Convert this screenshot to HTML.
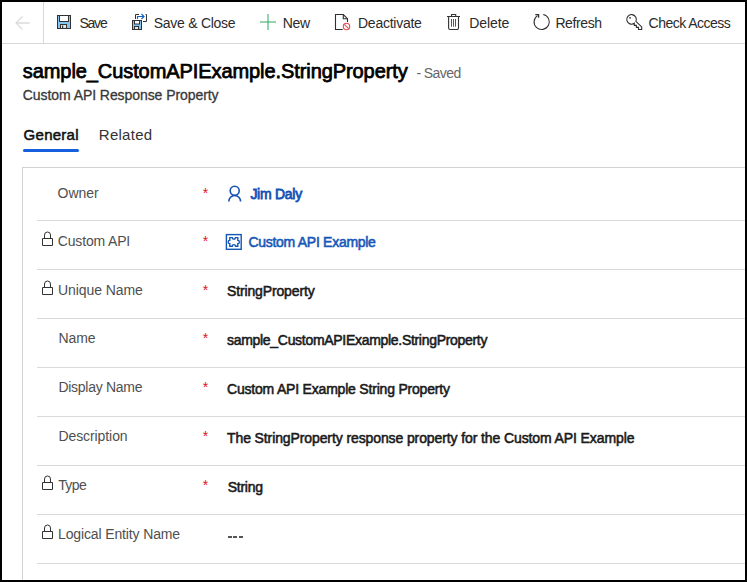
<!DOCTYPE html>
<html><head><meta charset="utf-8">
<style>
html,body{margin:0;padding:0;}
body{width:747px;height:582px;position:relative;overflow:hidden;background:#fff;font-family:"Liberation Sans",sans-serif;}
#border{position:absolute;left:0;top:0;width:747px;height:582px;box-sizing:border-box;border:2px solid #000;}
.a{position:absolute;white-space:pre;line-height:20px;height:20px;}
.tb{font-size:14px;color:#2b2b2b;top:13px;}
.ic{position:absolute;overflow:visible;}
.lbl{font-size:14px;color:#4a4a4a;}
.val{font-size:14px;color:#1a1a1a;font-weight:bold;}
.sep{position:absolute;left:37px;width:710px;height:1px;background:#dadada;}
.req{position:absolute;font-size:14px;color:#e3141c;line-height:20px;}
</style></head><body>
  <!-- toolbar -->
  <div style="position:absolute;left:0;top:43px;width:747px;height:1px;background:#d8d8d8"></div>
  <div style="position:absolute;left:43px;top:0;width:1px;height:43px;background:#d8d8d8"></div>
  <svg class="ic" style="left:0;top:0" width="747" height="44" viewBox="0 0 747 44">
    <!-- back arrow -->
    <path d="M29.7 23H16M22.5 16.5L16 23L22.5 29.5" fill="none" stroke="#dcdcdc" stroke-width="1.3"/>
    <!-- save -->
    <rect x="57.5" y="15.5" width="13" height="13" fill="#84c4f0" stroke="#333" stroke-width="1"/>
    <rect x="59.5" y="15.5" width="9" height="6" fill="#fff" stroke="#333" stroke-width="1"/>
    <rect x="60.5" y="24.5" width="6" height="4" fill="#e6e6e6" stroke="#333" stroke-width="1"/>
    <rect x="62" y="25.5" width="1.2" height="3" fill="#333"/>
    <!-- save & close -->
    <rect x="132.5" y="20.5" width="9" height="9" fill="#84c4f0" stroke="#333" stroke-width="1"/>
    <rect x="134.5" y="20.5" width="5" height="3.5" fill="#fff" stroke="#333" stroke-width="1"/>
    <rect x="134.5" y="26.5" width="4" height="3" fill="#e6e6e6" stroke="#333" stroke-width="1"/>
    <path d="M135.5 19V14.5H139M143 21.5H146.5V14.5H145.5" fill="none" stroke="#333" stroke-width="1"/>
    <path d="M137.5 19V16.5H144M141.5 14L144 16.5L141.5 19" fill="none" stroke="#1a62c0" stroke-width="1.2"/>
    <!-- new -->
    <path d="M260 22H276" fill="none" stroke="rgba(40,168,90,0.55)" stroke-width="1.8"/><path d="M268 14V30" fill="none" stroke="rgba(40,168,90,0.55)" stroke-width="1.8"/>
    <!-- deactivate -->
    <path d="M342.7 29.5H335.5V14.5H343.3L347.5 18.7V22" fill="none" stroke="#2e2e2e" stroke-width="1.1"/>
    <path d="M343.3 14.5V18.7H347.5" fill="none" stroke="#2e2e2e" stroke-width="1.1"/>
    <circle cx="346.5" cy="26.5" r="3.2" fill="none" stroke="#e8484f" stroke-width="1.1"/>
    <path d="M344.3 24.3L348.7 28.7" stroke="#e8484f" stroke-width="1.1"/>
    <!-- delete -->
    <path d="M447 16.5H460M451.5 16.5V14.5H455.7V16.5M448.6 16.5V28A1.5 1.5 0 0 0 450.1 29.5H457A1.5 1.5 0 0 0 458.5 28V16.5" fill="none" stroke="#333" stroke-width="1.1"/>
    <path d="M451.5 19V26.7M453.5 19V26.7M455.5 19V26.7" fill="none" stroke="#555" stroke-width="1"/>
    <!-- refresh -->
    <path d="M543.2 14.5A7.6 7.6 0 1 1 537.5 15.6" fill="none" stroke="#333" stroke-width="1.1"/>
    <path d="M535.3 14.6H538.6V17.8" fill="none" stroke="#333" stroke-width="1.3"/>
    <!-- key -->
    <path d="M635.9 21.4L641.7 26.9V29.5H638.5V27.4H636.4V25.4H634.3V23.3A4.8 4.8 0 1 1 635.9 21.4Z" fill="none" stroke="#2e2e2e" stroke-width="1.1" stroke-linejoin="miter"/>
    <rect x="629.3" y="17.1" width="1.5" height="1.5" fill="#2e2e2e"/>
  </svg>

  <span id="t_save" class="a" style="left:79.40px;top:13px;font-size:14px;color:#2b2b2b;letter-spacing:-1.200px">Save</span>
  <span id="t_saveclose" class="a" style="left:153.80px;top:13px;font-size:14px;color:#2b2b2b;letter-spacing:-0.275px">Save &amp; Close</span>
  <span id="t_new" class="a" style="left:282.80px;top:13px;font-size:14px;color:#2b2b2b;letter-spacing:-0.400px">New</span>
  <span id="t_deact" class="a" style="left:358.00px;top:13px;font-size:14px;color:#2b2b2b;letter-spacing:-0.249px">Deactivate</span>
  <span id="t_delete" class="a" style="left:469.20px;top:13px;font-size:14px;color:#2b2b2b;letter-spacing:-0.080px">Delete</span>
  <span id="t_refresh" class="a" style="left:555.40px;top:13px;font-size:14px;color:#2b2b2b;letter-spacing:-0.395px">Refresh</span>
  <span id="t_check" class="a" style="left:648.60px;top:13px;font-size:14px;color:#2b2b2b;letter-spacing:-0.523px">Check Access</span>
  <span id="h_title" class="a" style="left:22.80px;top:59px;font-size:20px;color:#000;line-height:24px;height:24px;-webkit-text-stroke-width:0.75px;letter-spacing:-0.081px">sample_CustomAPIExample.StringProperty</span>
  <span id="h_saved" class="a" style="left:416.40px;top:63px;font-size:14px;color:#666;letter-spacing:-0.562px">- Saved</span>
  <span id="h_sub" class="a" style="left:22.80px;top:85px;font-size:14px;color:#383838;-webkit-text-stroke-width:0.3px;letter-spacing:-0.069px">Custom API Response Property</span>
  <span id="tab_gen" class="a" style="left:23.60px;top:125px;font-size:15px;color:#111;-webkit-text-stroke-width:0.55px;letter-spacing:0.266px">General</span>
  <span id="tab_rel" class="a" style="left:98.80px;top:125px;font-size:15px;color:#333;letter-spacing:0.271px">Related</span>
  <span id="l1" class="a" style="left:57.60px;top:183px;font-size:14px;color:#4f4f4f;letter-spacing:-0.050px">Owner</span>
  <span id="l2" class="a" style="left:57.80px;top:231px;font-size:14px;color:#4f4f4f;letter-spacing:-0.169px">Custom API</span>
  <span id="l3" class="a" style="left:58.00px;top:280px;font-size:14px;color:#4f4f4f;letter-spacing:-0.080px">Unique Name</span>
  <span id="l4" class="a" style="left:58.40px;top:328px;font-size:14px;color:#4f4f4f;letter-spacing:-0.069px">Name</span>
  <span id="l5" class="a" style="left:58.40px;top:377px;font-size:14px;color:#4f4f4f;letter-spacing:-0.272px">Display Name</span>
  <span id="l6" class="a" style="left:58.40px;top:426px;font-size:14px;color:#4f4f4f;letter-spacing:-0.080px">Description</span>
  <span id="l7" class="a" style="left:58.20px;top:475px;font-size:14px;color:#4f4f4f;letter-spacing:-0.602px">Type</span>
  <span id="l8" class="a" style="left:58.00px;top:524px;font-size:14px;color:#4f4f4f;letter-spacing:-0.132px">Logical Entity Name</span>
  <span id="v1" class="a" style="left:250.40px;top:184px;font-size:14px;color:#1553b5;-webkit-text-stroke-width:0.8px;letter-spacing:-0.266px">Jim Daly</span>
  <span id="v2" class="a" style="left:248.40px;top:232px;font-size:14px;color:#1557b8;-webkit-text-stroke-width:0.55px;letter-spacing:-0.280px">Custom API Example</span>
  <span id="v3" class="a" style="left:227.00px;top:281px;font-size:14px;color:#1a1a1a;-webkit-text-stroke-width:0.55px;letter-spacing:-0.141px">StringProperty</span>
  <span id="v4" class="a" style="left:227.00px;top:330px;font-size:14px;color:#1a1a1a;-webkit-text-stroke-width:0.55px;letter-spacing:-0.300px">sample_CustomAPIExample.StringProperty</span>
  <span id="v5" class="a" style="left:227.00px;top:379px;font-size:14px;color:#1a1a1a;-webkit-text-stroke-width:0.55px;letter-spacing:-0.200px">Custom API Example String Property</span>
  <span id="v6" class="a" style="left:227.00px;top:428px;font-size:14px;color:#1a1a1a;-webkit-text-stroke-width:0.55px;letter-spacing:-0.105px">The StringProperty response property for the Custom API Example</span>
  <span id="v7" class="a" style="left:227.80px;top:477px;font-size:14px;color:#1a1a1a;-webkit-text-stroke-width:0.55px;letter-spacing:-0.280px">String</span>

  <!-- header -->

  <!-- tabs -->
  <div style="position:absolute;left:23px;top:149px;width:56px;height:3px;border-radius:2px;background:#165fde"></div>

  <!-- section -->
  <div style="position:absolute;left:22px;top:167px;width:800px;height:500px;border-left:1px solid #d2d2d2;border-top:1px solid #d2d2d2"></div>
  <div class="sep" style="top:220px"></div>
  <div class="sep" style="top:269px"></div>
  <div class="sep" style="top:318px"></div>
  <div class="sep" style="top:367px"></div>
  <div class="sep" style="top:416px"></div>
  <div class="sep" style="top:465px"></div>
  <div class="sep" style="top:514px"></div>
  <div class="sep" style="top:563px"></div>

  <!-- locks & form icons -->
  <svg class="ic" style="left:0;top:0" width="747" height="582" viewBox="0 0 747 582">
    <g fill="none" stroke="#333" stroke-width="1">
      <path d="M42.5 238.5H52.5V245.5H42.5Z M44.5 238.5V235A3 3 0 0 1 50.5 235V238.5"/>
      <path d="M42.5 287.5H52.5V294.5H42.5Z M44.5 287.5V284A3 3 0 0 1 50.5 284V287.5"/>
      <path d="M42.5 482.5H52.5V489.5H42.5Z M44.5 482.5V479A3 3 0 0 1 50.5 479V482.5"/>
      <path d="M42.5 531.5H52.5V538.5H42.5Z M44.5 531.5V528A3 3 0 0 1 50.5 528V531.5"/>
    </g>
    <!-- person -->
    <g fill="none" stroke="#1553b5" stroke-width="1.6">
      <circle cx="234.7" cy="190.8" r="4.5"/>
      <path d="M228.8 201.5A5.9 6 0 0 1 240.6 201.5"/>
    </g>
    <!-- puzzle -->
    <g fill="none" stroke="#1557b8" stroke-width="1.4">
      <rect x="226.4" y="234.6" width="14.8" height="14.7"/>
      <path d="M229.8 237.6H232.3A1.6 1.6 0 0 0 235.5 237.6H237.8V240.4A1.5 1.5 0 0 1 237.8 243.6V246.2H235.5A1.6 1.6 0 0 0 232.3 246.2H229.8V243.6A1.5 1.5 0 0 1 229.8 240.4Z"/>
    </g>
  </svg>

  <!-- rows labels -->

  <!-- asterisks -->
  <span class="a req" style="left:202.8px;top:183px">*</span>
  <span class="a req" style="left:202.8px;top:231px">*</span>
  <span class="a req" style="left:202.8px;top:280px">*</span>
  <span class="a req" style="left:202.8px;top:328px">*</span>
  <span class="a req" style="left:202.8px;top:377px">*</span>
  <span class="a req" style="left:202.8px;top:426px">*</span>
  <span class="a req" style="left:202.8px;top:475px">*</span>

  <!-- values -->

  <div style="position:absolute;left:227.5px;top:536px;width:4px;height:2px;background:#555"></div>
  <div style="position:absolute;left:233px;top:536px;width:4px;height:2px;background:#555"></div>
  <div style="position:absolute;left:238.5px;top:536px;width:4px;height:2px;background:#555"></div>
  <div id="border"></div>
</body></html>
